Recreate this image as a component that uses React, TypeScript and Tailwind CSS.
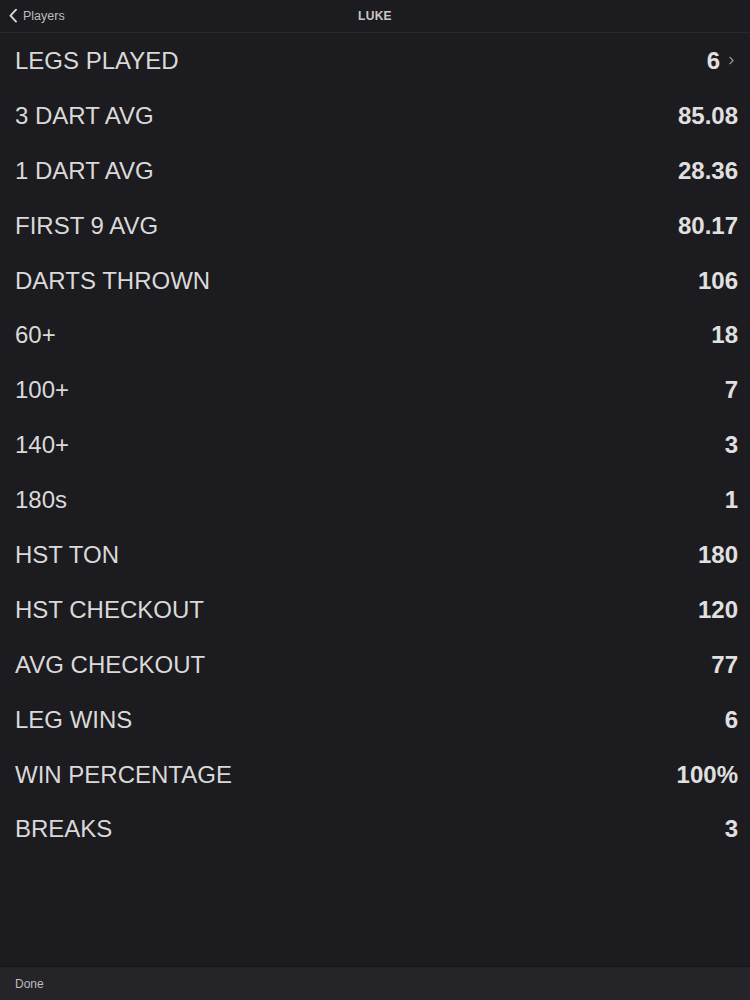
import { ChevronRight } from "lucide-react";

const stats: { label: string; value: string; more?: boolean }[] = [
  { label: "LEGS PLAYED", value: "6", more: true },
  { label: "3 DART AVG", value: "85.08" },
  { label: "1 DART AVG", value: "28.36" },
  { label: "FIRST 9 AVG", value: "80.17" },
  { label: "DARTS THROWN", value: "106" },
  { label: "60+", value: "18" },
  { label: "100+", value: "7" },
  { label: "140+", value: "3" },
  { label: "180s", value: "1" },
  { label: "HST TON", value: "180" },
  { label: "HST CHECKOUT", value: "120" },
  { label: "AVG CHECKOUT", value: "77" },
  { label: "LEG WINS", value: "6" },
  { label: "WIN PERCENTAGE", value: "100%" },
  { label: "BREAKS", value: "3" },
];

export default function App() {
  return (
    <div className="w-[750px] h-[1000px] bg-[#1c1b1f] flex flex-col font-['Liberation_Sans',_Arial,_sans-serif] text-[#dcdcdc]">
      {/* nav bar */}
      <div className="relative h-[33px] flex items-center justify-center border-b border-[#29282c] shrink-0">
        <button className="absolute left-[9px] top-1/2 -translate-y-1/2 flex items-center gap-[6px] text-[12.5px] text-[#bdbdbd]">
          <svg width="8" height="14" viewBox="0 0 8 14" fill="none" className="text-[#d4d4d4]">
            <path d="M7 1L1.5 7L7 13" stroke="currentColor" strokeWidth="2" strokeLinecap="round" strokeLinejoin="round" />
          </svg>
          Players
        </button>
        <h1 className="text-[12px] font-bold text-[#c8c8c8] tracking-wide">LUKE</h1>
      </div>

      {/* stats */}
      <div className="flex-1 pt-[0.5px]">
        {stats.map((s) => (
          <div key={s.label} className="h-[54.9px] flex items-center justify-between pl-[15px] pr-[12px]">
            <span className="text-[24px] text-[#d9d9d9]">{s.label}</span>
            <span className="flex items-center text-[24px] font-bold text-[#e0e0e0]">
              {s.value}
              {s.more && <ChevronRight size={13} strokeWidth={2} className="ml-[5px] text-[#9a9a9a]" />}
            </span>
          </div>
        ))}
      </div>

      {/* toolbar */}
      <div className="h-[34px] shrink-0 bg-[#252428] border-t border-[#141316] flex items-center px-[15px]">
        <span className="text-[12px] text-[#bdbdbd]">Done</span>
      </div>
    </div>
  );
}
